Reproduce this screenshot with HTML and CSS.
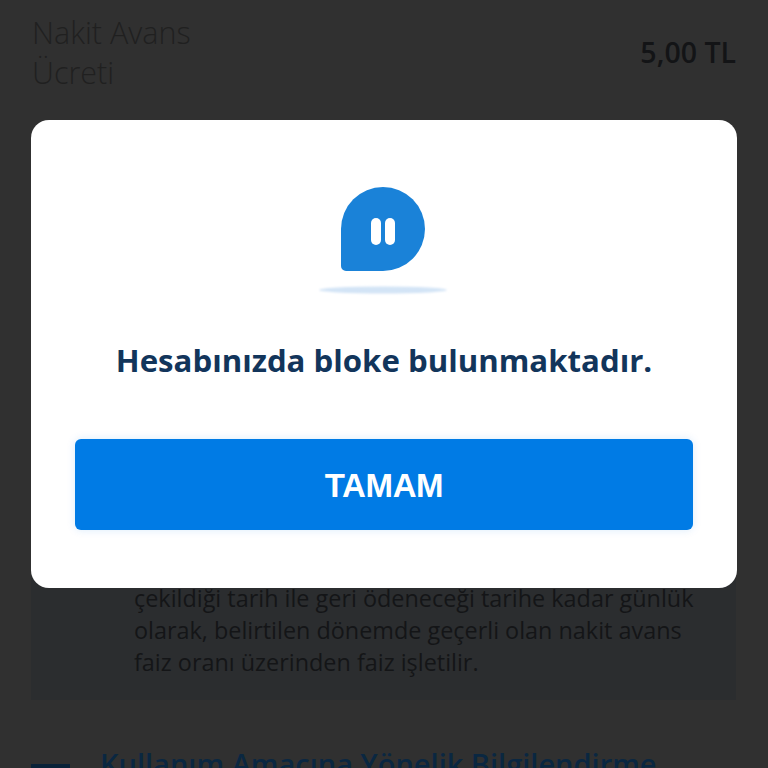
FILE: index.html
```html
<!DOCTYPE html>
<html lang="tr">
<head>
    <meta charset="UTF-8">
    <meta name="viewport" content="width=device-width, initial-scale=1.0">
    <title>Nakit Avans</title>
    <link rel="stylesheet" href="styles.css">
</head>
<body>
    <div class="page">
        <div class="fee-row">
            <div class="fee-label">Nakit Avans<br>Ücreti</div>
            <div class="fee-value">5,00 TL</div>
        </div>
        <div class="note">
            <p>çekildiği tarih ile geri ödeneceği tarihe kadar günlük<br>olarak, belirtilen dönemde geçerli olan nakit avans<br>faiz oranı üzerinden faiz işletilir.</p>
        </div>
        <div class="section-head">
            <span class="section-mark"></span>
            <h2>Kullanım Amacına Yönelik Bilgilendirme</h2>
        </div>
    </div>

    <div class="overlay">
        <div class="dialog">
            <svg class="dialog-icon" width="132" height="112" viewBox="0 0 132 112">
                <defs>
                    <filter id="blur" x="-20%" y="-100%" width="140%" height="300%">
                        <feGaussianBlur stdDeviation="1.2"></feGaussianBlur>
                    </filter>
                </defs>
                <path fill="#1a82d8" d="M65 1a42 42 0 0 1 0 84H28a5 5 0 0 1-5-5V43A42 42 0 0 1 65 1z"></path>
                <rect x="53" y="32" width="10" height="27" rx="5" fill="#fff"></rect>
                <rect x="67" y="32" width="10" height="27" rx="5" fill="#fff"></rect>
                <ellipse cx="65" cy="104" rx="64" ry="3.5" fill="#d3e4f6" filter="url(#blur)"></ellipse>
            </svg>
            <h1 class="dialog-title">Hesabınızda bloke bulunmaktadır.</h1>
            <button class="dialog-btn">TAMAM</button>
        </div>
    </div>
</body>
</html>
```
FILE: styles.css
```css
html, body {
    margin: 0;
    height: 768px;
    overflow: hidden;
}
body {
    font-family: 'Open Sans', sans-serif;
    background-color: #303030;
}
.page {
    height: 768px;
    padding: 12px 32px 0 32px;
    box-sizing: border-box;
    overflow: hidden;
}
.fee-row {
    display: flex;
    justify-content: space-between;
    align-items: center;
}
.fee-label {
    font-size: 30.5px;
    font-weight: 300;
    line-height: 40px;
    color: #202020;
}
.fee-value {
    font-size: 28.5px;
    font-weight: 600;
    color: #131416;
}
.note {
    margin: 400px 0 0 -1px;
    height: 208px;
    padding: 90px 32px 0 103px;
    box-sizing: border-box;
    background-color: #2b2d2f;
}
.note p {
    margin: 0;
    font-size: 23.4px;
    line-height: 32px;
    color: #141517;
}
.section-head {
    display: flex;
    gap: 30px;
    margin: 44px 0 0 -1px;
}
.section-mark {
    width: 39px;
    height: 6px;
    margin-top: 20px;
    background-color: #0a2238;
}
.section-head h2 {
    margin: 0;
    font-size: 29px;
    font-weight: 600;
    white-space: nowrap;
    color: #0a2741;
}
.overlay {
    position: absolute;
    top: 120px;
    left: 31px;
    width: 706px;
}
.dialog {
    display: flex;
    flex-direction: column;
    align-items: center;
    height: 468px;
    padding: 66px 44px 0 44px;
    box-sizing: border-box;
    background-color: white;
    border-radius: 18px;
}
.dialog-icon {
    display: block;
}
.dialog-title {
    margin: 42px 0 0 0;
    font-size: 31.2px;
    line-height: 40px;
    font-weight: 700;
    color: #12355b;
    white-space: nowrap;
}
.dialog-btn {
    width: 618px;
    height: 91px;
    margin-top: 59px;
    padding: 2px 0 0 0;
    border: none;
    border-radius: 6px;
    background-color: #007be5;
    box-shadow: 0 0 8px rgba(0,123,229,0.15);
    color: white;
    font-family: 'Liberation Sans', sans-serif;
    font-size: 33px;
    font-weight: 700;
    letter-spacing: -0.4px;
}
```
